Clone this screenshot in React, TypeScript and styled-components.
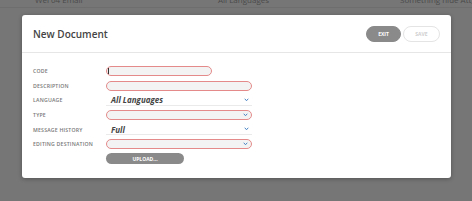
import styled, { createGlobalStyle } from 'styled-components'

const GlobalStyle = createGlobalStyle`
  html, body {
    margin: 0;
    padding: 0;
    background: #767676;
    font-family: "Open Sans", "Liberation Sans", sans-serif;
  }
`

const Page = styled.div`
  width: 472px;
  height: 201px;
  overflow: hidden;
  background: #767676;
`

const BackRow = styled.div`
  display: grid;
  grid-template-columns: 183px 182px 1fr;
  padding-left: 35px;
  height: 11px;
  margin-top: -4px;
  font-size: 8px;
  line-height: 8px;
  color: #4a4a4a;
  white-space: nowrap;
  overflow: hidden;
  border-bottom: 1px solid #6e6e6e;
`

const Modal = styled.div`
  margin: 7px 0 0 22px;
  width: 429px;
  height: 163px;
  background: #fff;
  border-radius: 3px;
  box-shadow: 0 1px 4px rgba(0, 0, 0, 0.3);
  overflow: hidden;
`

const Header = styled.div`
  display: flex;
  align-items: center;
  justify-content: space-between;
  height: 37px;
  padding: 0 11px;
  border-bottom: 1px solid #e6e6e6;
`

const Title = styled.h1`
  margin: 0;
  font-size: 10px;
  font-weight: 600;
  color: #444;
`

const Actions = styled.div`
  display: flex;
  gap: 2px;
`

const PillButton = styled.button<{ $filled?: boolean }>`
  height: 16px;
  width: ${p => (p.$filled ? '35px' : '37px')};
  border-radius: 8px;
  border: 1px solid ${p => (p.$filled ? '#8a8a8a' : '#e4e4e4')};
  background: ${p => (p.$filled ? '#8a8a8a' : '#fff')};
  color: ${p => (p.$filled ? '#fff' : '#cfcfcf')};
  font-family: inherit;
  font-size: 5px;
  font-weight: 700;
  padding: 0;
`

const Body = styled.div`
  display: grid;
  grid-template-columns: 73px 146px;
  grid-auto-rows: 14.6px;
  align-items: center;
  padding: 11px 11px 0;
`

const Label = styled.div`
  font-size: 5.2px;
  font-weight: 600;
  color: #777;
  letter-spacing: 0.2px;
  text-transform: uppercase;
`

const Field = styled.div<{ $width?: number; $required?: boolean }>`
  position: relative;
  height: 10px;
  width: ${p => (p.$width ? `${p.$width}px` : '100%')};
  box-sizing: border-box;
  border-radius: 6px;
  border: 1px solid ${p => (p.$required ? '#e48a8a' : 'transparent')};
  background: ${p => (p.$required ? '#f3f3f3' : '#fff')};
  display: flex;
  align-items: center;
  padding-left: 5px;
`

const PlainSelect = styled.div`
  position: relative;
  height: 11px;
  width: 100%;
  box-sizing: border-box;
  border-bottom: 1px solid #eaeaea;
  display: flex;
  align-items: center;
  padding-left: 5px;
  font-size: 8px;
  font-weight: 700;
  font-style: italic;
  color: #444;
`

const Caret = styled.span`
  position: absolute;
  left: 1px;
  top: 1px;
  width: 1px;
  height: 6px;
  background: #333;
`

const Chevron = styled.svg`
  position: absolute;
  right: 3px;
  top: 50%;
  margin-top: -2px;
  width: 5px;
  height: 4px;
`

const Upload = styled.button`
  width: 78px;
  height: 11px;
  border-radius: 6px;
  border: none;
  background: #8a8a8a;
  color: #fff;
  font-family: inherit;
  font-size: 5px;
  font-weight: 700;
  padding: 0;
`

const Arrow = () => (
  <Chevron viewBox="0 0 10 8">
    <path d="M1.5 1.5 L5 5.5 L8.5 1.5" fill="none" stroke="#4a86c5" strokeWidth="2" />
  </Chevron>
)

export default function App() {
  return (
    <Page>
      <GlobalStyle />
      <BackRow>
        <span>Wel 04 Email</span>
        <span>All Languages</span>
        <span>Something hide Att_Leg</span>
      </BackRow>
      <Modal>
        <Header>
          <Title>New Document</Title>
          <Actions>
            <PillButton $filled>EXIT</PillButton>
            <PillButton>SAVE</PillButton>
          </Actions>
        </Header>
        <Body>
          <Label>Code</Label>
          <Field $width={106} $required>
            <Caret />
          </Field>

          <Label>Description</Label>
          <Field $required />

          <Label>Language</Label>
          <PlainSelect>
            All Languages
            <Arrow />
          </PlainSelect>

          <Label>Type</Label>
          <Field $required>
            <Arrow />
          </Field>

          <Label>Message History</Label>
          <PlainSelect>
            Full
            <Arrow />
          </PlainSelect>

          <Label>Editing Destination</Label>
          <Field $required>
            <Arrow />
          </Field>

          <span />
          <Upload>UPLOAD...</Upload>
        </Body>
      </Modal>
    </Page>
  )
}
